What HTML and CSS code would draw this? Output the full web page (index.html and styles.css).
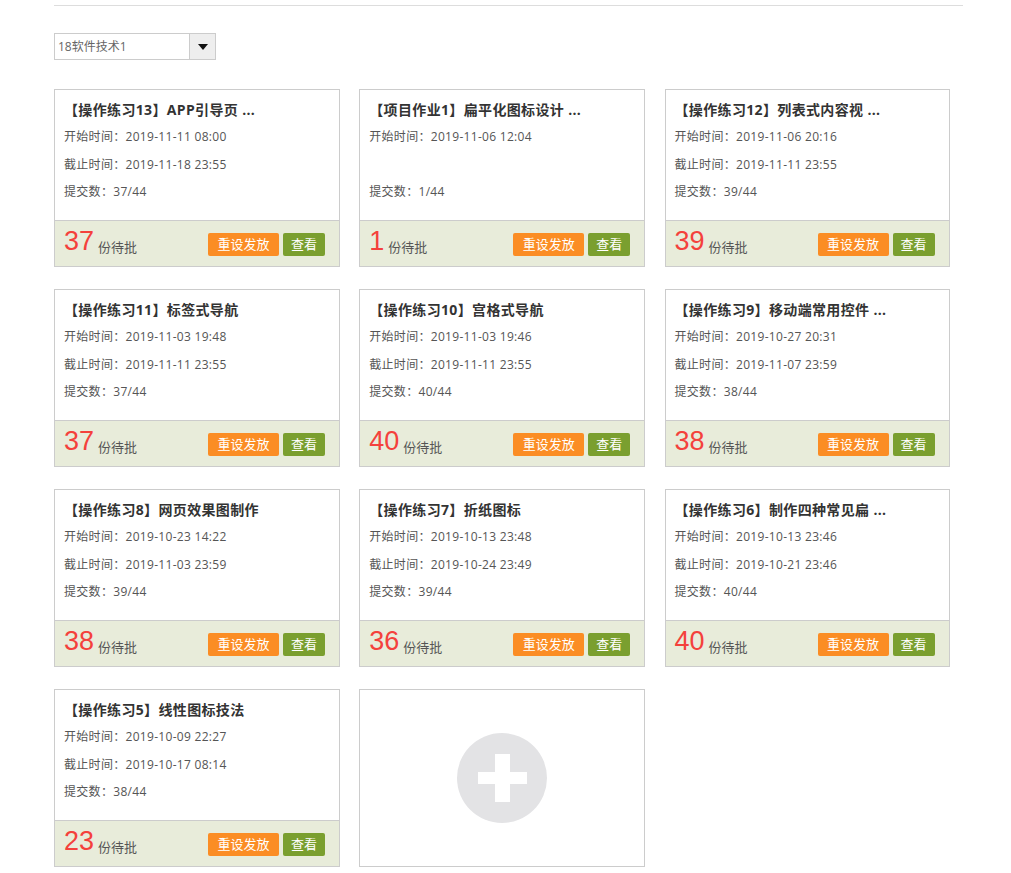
FILE: index.html
```html
<!DOCTYPE html>
<html lang="zh-CN">
<head>
<meta charset="utf-8">
<title>作业列表</title>
<link rel="stylesheet" href="styles.css">
</head>
<body>
<div class="page">
  <div class="topline"></div>
  <div class="select">
    <span class="select-text">18软件技术1</span>
    <span class="select-btn"><svg width="10" height="6" viewBox="0 0 10 6"><path d="M0 0H10L5 6Z" fill="#111"/></svg></span>
  </div>
  <div class="grid">
    <div class="card">
      <div class="card-body">
        <div class="title">【操作练习13】APP引导页 ...</div>
        <div class="info">开始时间<span class="sep">：</span>2019-11-11 08:00</div>
        <div class="info">截止时间<span class="sep">：</span>2019-11-18 23:55</div>
        <div class="info">提交数<span class="sep">：</span>37/44</div>
      </div>
      <div class="card-foot"><span class="num">37</span><span class="unit">份待批</span><span class="btn orange">重设发放</span><span class="btn green">查看</span></div>
    </div>
    <div class="card">
      <div class="card-body">
        <div class="title">【项目作业1】扁平化图标设计 ...</div>
        <div class="info">开始时间<span class="sep">：</span>2019-11-06 12:04</div>
        <div class="info"></div>
        <div class="info">提交数<span class="sep">：</span>1/44</div>
      </div>
      <div class="card-foot"><span class="num">1</span><span class="unit">份待批</span><span class="btn orange">重设发放</span><span class="btn green">查看</span></div>
    </div>
    <div class="card">
      <div class="card-body">
        <div class="title">【操作练习12】列表式内容视 ...</div>
        <div class="info">开始时间<span class="sep">：</span>2019-11-06 20:16</div>
        <div class="info">截止时间<span class="sep">：</span>2019-11-11 23:55</div>
        <div class="info">提交数<span class="sep">：</span>39/44</div>
      </div>
      <div class="card-foot"><span class="num">39</span><span class="unit">份待批</span><span class="btn orange">重设发放</span><span class="btn green">查看</span></div>
    </div>
    <div class="card">
      <div class="card-body">
        <div class="title">【操作练习11】标签式导航</div>
        <div class="info">开始时间<span class="sep">：</span>2019-11-03 19:48</div>
        <div class="info">截止时间<span class="sep">：</span>2019-11-11 23:55</div>
        <div class="info">提交数<span class="sep">：</span>37/44</div>
      </div>
      <div class="card-foot"><span class="num">37</span><span class="unit">份待批</span><span class="btn orange">重设发放</span><span class="btn green">查看</span></div>
    </div>
    <div class="card">
      <div class="card-body">
        <div class="title">【操作练习10】宫格式导航</div>
        <div class="info">开始时间<span class="sep">：</span>2019-11-03 19:46</div>
        <div class="info">截止时间<span class="sep">：</span>2019-11-11 23:55</div>
        <div class="info">提交数<span class="sep">：</span>40/44</div>
      </div>
      <div class="card-foot"><span class="num">40</span><span class="unit">份待批</span><span class="btn orange">重设发放</span><span class="btn green">查看</span></div>
    </div>
    <div class="card">
      <div class="card-body">
        <div class="title">【操作练习9】移动端常用控件 ...</div>
        <div class="info">开始时间<span class="sep">：</span>2019-10-27 20:31</div>
        <div class="info">截止时间<span class="sep">：</span>2019-11-07 23:59</div>
        <div class="info">提交数<span class="sep">：</span>38/44</div>
      </div>
      <div class="card-foot"><span class="num">38</span><span class="unit">份待批</span><span class="btn orange">重设发放</span><span class="btn green">查看</span></div>
    </div>
    <div class="card">
      <div class="card-body">
        <div class="title">【操作练习8】网页效果图制作</div>
        <div class="info">开始时间<span class="sep">：</span>2019-10-23 14:22</div>
        <div class="info">截止时间<span class="sep">：</span>2019-11-03 23:59</div>
        <div class="info">提交数<span class="sep">：</span>39/44</div>
      </div>
      <div class="card-foot"><span class="num">38</span><span class="unit">份待批</span><span class="btn orange">重设发放</span><span class="btn green">查看</span></div>
    </div>
    <div class="card">
      <div class="card-body">
        <div class="title">【操作练习7】折纸图标</div>
        <div class="info">开始时间<span class="sep">：</span>2019-10-13 23:48</div>
        <div class="info">截止时间<span class="sep">：</span>2019-10-24 23:49</div>
        <div class="info">提交数<span class="sep">：</span>39/44</div>
      </div>
      <div class="card-foot"><span class="num">36</span><span class="unit">份待批</span><span class="btn orange">重设发放</span><span class="btn green">查看</span></div>
    </div>
    <div class="card">
      <div class="card-body">
        <div class="title">【操作练习6】制作四种常见扁 ...</div>
        <div class="info">开始时间<span class="sep">：</span>2019-10-13 23:46</div>
        <div class="info">截止时间<span class="sep">：</span>2019-10-21 23:46</div>
        <div class="info">提交数<span class="sep">：</span>40/44</div>
      </div>
      <div class="card-foot"><span class="num">40</span><span class="unit">份待批</span><span class="btn orange">重设发放</span><span class="btn green">查看</span></div>
    </div>
    <div class="card">
      <div class="card-body">
        <div class="title">【操作练习5】线性图标技法</div>
        <div class="info">开始时间<span class="sep">：</span>2019-10-09 22:27</div>
        <div class="info">截止时间<span class="sep">：</span>2019-10-17 08:14</div>
        <div class="info">提交数<span class="sep">：</span>38/44</div>
      </div>
      <div class="card-foot"><span class="num">23</span><span class="unit">份待批</span><span class="btn orange">重设发放</span><span class="btn green">查看</span></div>
    </div>
    <div class="card add">
      <svg width="92" height="92" viewBox="0 0 92 92"><circle cx="46" cy="46" r="45" fill="#e3e3e5"/><rect x="22" y="40" width="49" height="12" fill="#fff"/><rect x="39" y="22" width="15" height="48" fill="#fff"/></svg>
    </div>
  </div>
</div>
</body>
</html>
```

FILE: styles.css
```css
* { box-sizing: border-box; }
html, body { margin: 0; padding: 0; background: #fff; }
body {
  font-family: "Open Sans", "Noto Sans CJK SC", sans-serif;
  color: #555;
}
.page {
  width: 909px;
  margin-left: 54px;
}
.topline {
  height: 6px;
  border-bottom: 1px solid #ddd;
}
.select {
  margin-top: 27px;
  width: 162px;
  height: 27px;
  border: 1px solid #ccc;
  display: flex;
  align-items: stretch;
}
.select-text {
  flex: 1;
  font-size: 12px;
  line-height: 25px;
  padding-left: 3px;
  color: #666;
}
.select-btn {
  width: 26px;
  background: #eee;
  border-left: 1px solid #ccc;
  display: flex;
  align-items: center;
  justify-content: center;
}
.grid {
  margin-top: 29px;
  display: grid;
  grid-template-columns: 286px 286px 285px;
  column-gap: 19.25px;
  row-gap: 22px;
}
.card {
  height: 178px;
  border: 1px solid #ccc;
  display: flex;
  flex-direction: column;
  background: #fff;
}
.card-body {
  height: 130px;
  padding: 8px 9px 0 9px;
}
.title {
  font-size: 14px;
  font-weight: bold;
  color: #333;
  line-height: 24px;
  letter-spacing: 0.35px;
  white-space: nowrap;
}
.info {
  font-size: 12px;
  line-height: 27.5px;
  height: 27.5px;
  letter-spacing: 0.3px;
  color: #555;
}
.sep {
  font-family: "Noto Sans CJK TC", sans-serif;
}
.card-foot {
  flex: 1;
  border-top: 1px solid #ccc;
  background: #e8ecda;
  display: flex;
  align-items: center;
  padding: 0 14px 0 9px;
}
.num {
  font-size: 27px;
  color: #f4413c;
  line-height: 1;
  margin-top: -4px;
  font-family: "Liberation Sans", sans-serif;
}
.unit {
  font-size: 13px;
  color: #555;
  margin-left: 4px;
  margin-top: 6px;
  flex: 1;
}
.btn {
  height: 23px;
  line-height: 23px;
  font-size: 13px;
  color: #fff;
  border-radius: 2px;
  text-align: center;
  margin-top: 1px;
}
.orange { background: #fb8d24; width: 71px; }
.green { background: #7a9f2f; width: 42px; margin-left: 4px; }
.add {
  align-items: center;
  justify-content: center;
}
```
